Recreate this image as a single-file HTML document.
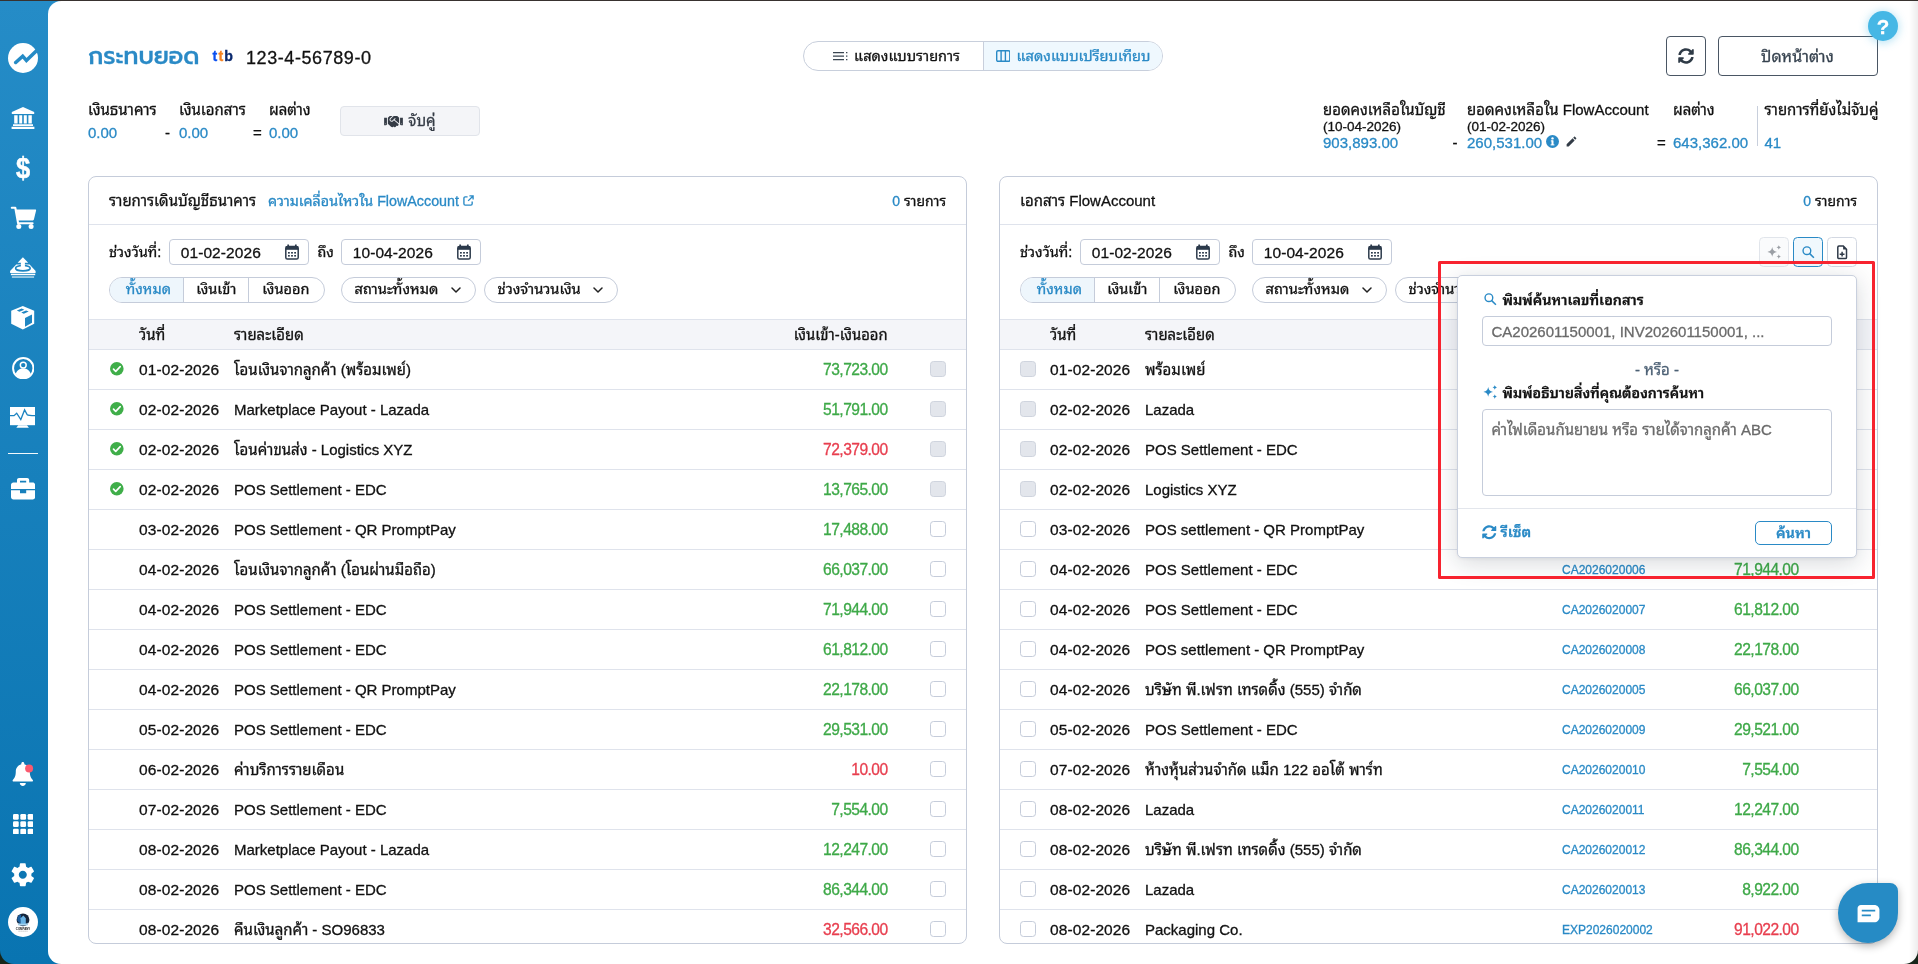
<!DOCTYPE html>
<html lang="th">
<head>
<meta charset="utf-8">
<title>กระทบยอด - FlowAccount</title>
<style>
*{box-sizing:border-box;margin:0;padding:0}
html,body{width:1918px;height:964px;overflow:hidden;background:#0d1a12}
body{font-family:"Liberation Sans","Noto Sans Thai Looped","Loma","Noto Sans Thai",sans-serif;font-size:15px;line-height:20px;color:#111;-webkit-font-smoothing:antialiased;-webkit-text-stroke:.3px}
#win{position:absolute;left:0;top:0;width:1918px;height:964px;overflow:hidden;background:#16261a;will-change:transform}
#win:before{content:"";position:absolute;left:0;top:0;width:1918px;height:1px;background:#38322f;z-index:50}
#side{position:absolute;left:0;top:0;width:60px;height:964px;background:linear-gradient(180deg,#258cc7 0%,#0974b1 100%);border-radius:0 0 0 14px}
#side svg{position:absolute;display:block}
svg text{-webkit-text-stroke:0}
#main{position:absolute;left:48px;top:1px;width:1870px;height:963px;background:#fff;border-radius:13px 0 14px 13px}
#main:after{content:"";position:absolute;right:0;top:0;width:9px;height:100%;background:linear-gradient(90deg,rgba(0,0,0,0),rgba(0,0,0,.07));border-radius:0 0 14px 0}
.abs{position:absolute;white-space:nowrap}
.blue{color:#2a8ac6}
/* header */
#title{left:40px;top:37px;font-family:"Liberation Sans","Prompt","Kanit","Noto Sans Thai",sans-serif;font-size:23.5px;line-height:36px;color:#2a8ac6;font-weight:500}
#ttb{left:164.6px;top:44.85px;font-size:14.2px;line-height:20px;font-weight:700;letter-spacing:1.05px;color:#0a4ff0}
#acct{left:198px;top:44px;font-size:18px;line-height:26px;letter-spacing:.58px;color:#111}
#toggle{left:755px;top:40px;width:360px;height:30px;border:1px solid #c8cfdc;border-radius:15px;overflow:hidden;display:flex;background:#fff}
#toggle span{font-size:14.6px;display:flex;align-items:center;justify-content:center;height:100%;white-space:nowrap}
#toggle .t1{width:180px;padding-left:6px}
#toggle .t2{width:180px;border-left:1px solid #c8cfdc;background:#eff8fe;color:#2a8ac6}
#toggle svg{width:14.5px;height:14px;margin-right:6.5px;display:block}
#refresh{left:1618px;top:34.9px;width:40px;height:40px;border:1px solid #4a5664;border-radius:4px;background:#fff}
#refresh svg{position:absolute;left:11px;top:11px;width:16px;height:16px}
#close{left:1670.1px;top:34.9px;width:159.7px;padding-right:1px;height:40px;border:1px solid #4a5664;border-radius:4px;background:#fff;text-align:center;line-height:40px;font-size:16px;color:#36424f}
/* summary */
.sm{font-size:15px;line-height:18px}
.smv{font-size:15px;line-height:18px;color:#2a8ac6}
#pair{left:292px;top:105px;width:140px;height:29.5px;border:1px solid #e1e4ea;border-radius:4px;background:#f4f5f8;text-align:center;line-height:28px;color:#353c46}
#pair svg{display:inline-block;width:19px;height:15px;vertical-align:-2.5px;margin-right:5px}
#vdiv{left:1709px;top:105px;width:1px;height:40px;background:#c8cfdc}
/* panels */
.panel{position:absolute;top:175px;width:879px;height:768px;border:1px solid #c5ccda;border-radius:8px;overflow:hidden;background:#fff}
#pl{left:40px}
#pr{left:951px}
.panel>*{position:absolute;white-space:nowrap}
.ph{left:0;top:0;width:100%;height:48px;border-bottom:1px solid #dfe3ec}
.ph>*{position:absolute;white-space:nowrap;top:14px;line-height:20px}
.pt{left:20px}
.plink{left:179px;color:#2a8ac6;font-size:14.3px}
.plink svg{display:inline-block;width:11px;height:11px;margin-left:4px;vertical-align:0}
.pc{right:20px;font-size:14px}
.pc b{font-weight:400;color:#2a8ac6}
.dates{left:0;top:62px;width:500px;height:26px}
.dates>*{position:absolute;white-space:nowrap}
.lbl{left:20px;top:3px;line-height:20px;font-size:14.55px}
.to{left:228.5px;top:3px;line-height:20px;font-size:14.55px}
.dinp{top:0;width:139.5px;height:25.5px;border:1px solid #c5ccda;border-radius:4px;background:#fff}
.dinp span{position:absolute;left:10.7px;top:3px;line-height:20px;letter-spacing:.1px;font-size:15.5px}
.dinp svg{position:absolute;right:8.4px;top:4px;width:14px;height:16px}
.d1{left:80px}
.d2{left:252px}
.seg{left:20px;top:100px;width:216px;font-size:14.55px;height:25.5px;border:1px solid #c5ccda;border-radius:13px;overflow:hidden;display:flex;background:#fff}
.seg span{height:100%;text-align:center;line-height:23px;border-left:1px solid #c5ccda}
.seg .s1{width:73.3px;border-left:0;padding-left:3.5px}
.seg .s2{width:65px}
.seg .s3{width:75.7px;padding-right:1.5px}
.seg .on{background:#eef6fc;color:#2a8ac6}
.dd{top:100px;height:25.5px;border:1px solid #c5ccda;border-radius:13px;background:#fff}
.dd span{position:absolute;left:12.5px;top:0;line-height:23px;font-size:14.65px}
.dd svg{position:absolute;right:14px;top:9px;width:10px;height:6px}
.dd1{left:252px;width:134.5px}
.dd2{left:395px;width:133.5px}
.th{left:0;top:142px;width:100%;height:31px;background:#f4f5f9;border-top:1px solid #dfe3ec;border-bottom:1px solid #dfe3ec}
.th>*,.row>*{position:absolute;white-space:nowrap;line-height:20px}
.th>*{top:5px}
.th .c-amt{font-size:14.85px;margin-right:-.7px}
.rows{left:0;top:173px;width:100%}
.row{position:relative;width:100%;height:40px;border-bottom:1px solid #dfe3ec}
.row>*{top:10px}
#pl .c-date{left:50px}
#pl .c-desc{left:145px}
#pl .c-amt{right:79px}
#pl .cb{left:841px}
#pl .ok{left:21.2px;top:12.3px;width:13.6px;height:13.6px}
#pr .cb{left:20px}
#pr .c-date{left:50px}
#pr .c-desc{left:145px}
#pr .c-doc{left:562px;font-size:12px;color:#2a8ac6;margin-top:-.4px}
#pr .th .c-doc{font-size:15px;color:#111}
#pr .c-amt{right:79px}
.c-date{letter-spacing:.1px;font-size:15.5px}
.th .c-date{letter-spacing:0;font-size:15px}
.row .c-amt{font-size:15.6px;letter-spacing:-.55px;margin-right:-.55px}
.g{color:#3ea948}
.r{color:#e83f4f}
.cb{top:10.8px !important;width:16px;height:16px;border:1px solid #c5ccda;border-radius:3.5px;background:#fff}
.cb.dis{background:#e3e6ec;border-color:#cfd4de}
/* tools */
.tool{top:60.2px;width:29.5px;height:29.5px;border:1px solid #d3d8e2;border-radius:4.5px;background:#fff}
.tool svg{position:absolute;left:5.75px;top:5.75px;width:16px;height:16px}
.tl1{left:759.2px;background:#fafbfc;border-color:#e1e5eb}
.tl2{left:793.1px;border-color:#2a8ac6;background:#f0f8fd}
.tl3{left:827.2px}
/* popup */
#pop{left:1409px;top:274px;width:400px;height:283px;border:1px solid #c9d0de;border-radius:5px;background:#fff;box-shadow:0 5px 24px rgba(20,30,50,.17),0 1px 3px rgba(20,30,50,.06);z-index:20}
#pop>*{position:absolute;white-space:nowrap}
#pop .l1{left:44.5px;top:13.5px;font-weight:600;font-size:14.4px;line-height:20px}
#pop .i1{left:23.5px;top:15px;width:16px;height:16px}
#pop .inp{left:24px;top:40px;width:350px;height:30px;border:1px solid #c5ccda;border-radius:4px;color:#6a6a6a;line-height:29px;padding-left:8.5px;font-size:15px}
#pop .or{left:0;top:84px;width:100%;text-align:center;color:#4d6175;line-height:20px}
#pop .l2{left:44.5px;top:106.5px;font-weight:600;font-size:14.25px;line-height:20px}
#pop .i2{left:24px;top:108px;width:16px;height:16px}
#pop .ta{left:24px;top:133px;width:350px;height:87px;border:1px solid #c5ccda;border-radius:4px;color:#6a6a6a;line-height:20px;padding:9.8px 8.5px;font-size:15px}
#pop .sep{left:0;top:232.3px;width:100%;height:1px;background:#e3e6ec}
#pop .reset{left:24px;top:246px;color:#2a8ac6;line-height:20px;font-weight:600;font-size:14.6px}
#pop .reset svg{display:inline-block;width:14.5px;height:14.5px;vertical-align:-2.5px;margin-right:4px}
#pop .go{left:297px;top:245px;width:77px;height:24px;border:1px solid #2a8ac6;border-radius:5px;color:#2a8ac6;text-align:center;line-height:22px;font-weight:600;font-size:14.6px}
#red{left:1390.2px;top:259.9px;width:437.3px;height:317.9px;border:3.5px solid #f7232f;border-radius:1.5px;z-index:30}
/* floats */
#help{left:1868px;top:11px;width:30px;height:30px;border-radius:50%;background:#46b7e5;box-shadow:0 1px 8px 1px rgba(70,183,229,.38);color:#fff;font-weight:700;font-size:20.5px;line-height:31px;text-align:center;z-index:40}
#chat{left:1838px;top:883px;width:60px;height:60px;border-radius:30px 8px 30px 30px;background:#268bc5;box-shadow:0 3px 8px rgba(0,0,0,.3);z-index:40}
#chat svg{position:absolute;left:19px;top:22.3px;width:23px;height:17.3px}
</style>
</head>
<body>
<div id="win">
<div id="side">
<!-- trend logo -->
<svg style="left:7.900px;top:42.900px;width:30px;height:30px" viewBox="0 0 30 30"><circle cx="15" cy="15" r="15" fill="#fff"/><path d="M7.700 19.500l7-6.300 3.700 4.200L30 6.200" fill="none" stroke="#258bc6" stroke-width="3.500" stroke-linecap="round" stroke-linejoin="miter"/></svg>
<!-- bank -->
<svg style="left:11px;top:106.500px;width:24px;height:22px" viewBox="0 0 24 22"><path fill="#fff" d="M12 0L.800 5v2h22.400V5zM3.200 8.200h3.400v8.200H3.200zM8.200 8.200h3v8.200h-3zM12.800 8.200h3v8.200h-3zM17.400 8.200h3.400v8.200h-3.400zM2 17.200h20V19H2zM.600 19.800h22.800V22H.600z"/></svg>
<!-- dollar -->
<svg style="left:13px;top:152.500px;width:20px;height:31px" viewBox="0 0 20 31"><text x="11.400" y="25" text-anchor="middle" font-family="Liberation Sans, sans-serif" font-weight="700" font-size="29" fill="#fff" stroke="#fff" stroke-width=".5" transform="scale(.88,1)">$</text></svg>
<!-- cart -->
<svg style="left:10px;top:206px;width:27px;height:24px" viewBox="0 0 27 24"><path d="M1.800 1.800H5.300L8.100 17.200H22.600" stroke="#fff" stroke-width="2.100" fill="none" stroke-linecap="round" stroke-linejoin="round"/><path fill="#fff" d="M5.800 3.500h19.600c.5 0 .8.400.7.900l-2.200 9.200c-.1.500-.5.800-1 .800H8z"/><circle cx="8.800" cy="20.500" r="2.500" fill="#fff"/><circle cx="21.100" cy="20.500" r="2.500" fill="#fff"/></svg>
<!-- upload tray -->
<svg style="left:10px;top:257px;width:26px;height:22px" viewBox="0 0 26 22"><path fill="#fff" d="M6.200 7.600h13.400l6 6.400v1.900H.1V14z"/><ellipse cx="12.900" cy="11.200" rx="7.300" ry="2.700" fill="none" stroke="#1f86c2" stroke-width="1.600"/><path fill="#fff" d="M12.900.300l5.300 5.500h-3.300v5.400h-4V5.800H7.600z"/><rect x=".900" y="16.700" width="24.300" height="1.500" fill="#fff"/><rect x="1.900" y="19.200" width="22.200" height="1.700" fill="#fff" opacity=".6"/></svg>
<!-- box -->
<svg style="left:11px;top:305.500px;width:24px;height:24px" viewBox="0 0 24 24"><path fill="#fff" d="M11.800.100l11.400 4.700v12.900l-11.400 5.900L.200 17.700V4.800z"/><path fill="#1f86c2" d="M14 12.100l7-3.600v8.200l-7 4z"/><path fill="#1f86c2" d="M5.800 4.600l4.900-2 2.600 1.100-4.900 2.100zM10.200 6.600l4.900-2.100 2.600 1.100-4.900 2.200z"/></svg>
<!-- user circle -->
<svg style="left:11.700px;top:356.600px;width:22.500px;height:22.500px" viewBox="0 0 23 23"><circle cx="11.500" cy="11.500" r="10.400" fill="none" stroke="#fff" stroke-width="2"/><circle cx="11.500" cy="8.300" r="3" fill="none" stroke="#fff" stroke-width="1.500"/><path fill="#fff" d="M3.800 17.400c.9-3.600 3.900-5.600 7.700-5.600s6.800 2 7.700 5.600c-1.800 2.900-4.500 4.400-7.700 4.400s-5.900-1.500-7.700-4.400z"/></svg>
<!-- monitor -->
<svg style="left:10.300px;top:407.200px;width:25.200px;height:20.800px" viewBox="0 0 25.200 20.800"><path fill="#fff" d="M0 0h25.200v18.200H0z"/><path fill="#fff" d="M8.200 18.200h8.800l1.900 2.600H6.300z"/><path d="M0 8.700h4l2.700-2.500 4.100 6.300 3.800-9.600 2.400 4.500c1.200 1.100 3.600 1.300 8.200 1.300" fill="none" stroke="#1c83c0" stroke-width="1.300" stroke-linejoin="miter"/></svg>
<div style="position:absolute;left:8px;top:452.700px;width:30px;height:1.500px;background:rgba(255,255,255,.95)"></div>
<!-- briefcase -->
<svg style="left:10.900px;top:478.300px;width:24.200px;height:21.500px" viewBox="0 0 24.200 21.500"><path fill="#fff" d="M8 0h8.200c1.100 0 2 .9 2 2v2.400h3.600c1.300 0 2.400 1.100 2.400 2.400v4.200H15.200v-.1H9v.1H0V6.800c0-1.300 1.100-2.400 2.400-2.400H6V2c0-1.100.9-2 2-2zm1 2.700v1.700h6.200V2.700z"/><path fill="#fff" d="M0 12.300h9v3h6.200v-3h9v6.800c0 1.300-1.100 2.400-2.400 2.400H2.400C1.100 21.500 0 20.400 0 19.100z"/></svg>
<!-- bell -->
<svg style="left:12px;top:761.500px;width:25px;height:26px" viewBox="0 0 25 26"><path fill="#fff" d="M10.800 0c-.9 0-1.500.7-1.500 1.500v.8C6 3.200 3.800 6.200 3.800 9.600c0 4.600-1.300 6.600-3 8.300-.5.600-.1 1.700.8 1.700h18.400c.9 0 1.300-1.100.8-1.700-1.700-1.700-3-3.700-3-8.300 0-3.400-2.200-6.400-5.500-7.300v-.8c0-.8-.6-1.500-1.500-1.500z"/><path fill="#fff" d="M7.800 21h6c0 1.600-1.300 2.900-3 2.900s-3-1.300-3-2.900z"/><circle cx="17.100" cy="6.400" r="4" fill="#fb5a6f"/></svg>
<!-- grid -->
<svg style="left:12.800px;top:813.700px;width:20.400px;height:20.400px" viewBox="0 0 21 21"><g fill="#fff"><rect x="0" y="0" width="5.900" height="5.900" rx="1.300"/><rect x="7.550" y="0" width="5.900" height="5.900" rx="1.300"/><rect x="15.100" y="0" width="5.900" height="5.900" rx="1.300"/><rect x="0" y="7.550" width="5.900" height="5.900" rx="1.300"/><rect x="7.550" y="7.550" width="5.900" height="5.900" rx="1.300"/><rect x="15.100" y="7.550" width="5.900" height="5.900" rx="1.300"/><rect x="0" y="15.100" width="5.900" height="5.900" rx="1.300"/><rect x="7.550" y="15.100" width="5.900" height="5.900" rx="1.300"/><rect x="15.100" y="15.100" width="5.900" height="5.900" rx="1.300"/></g></svg>
<!-- gear -->
<svg style="left:9.200px;top:860.700px;width:27.600px;height:27.600px" viewBox="0 0 24 24"><path fill="#fff" d="M19.430 12.980c.040-.320.070-.640.070-.980s-.030-.660-.070-.980l2.110-1.650c.190-.150.240-.420.120-.640l-2-3.460c-.120-.220-.390-.300-.610-.220l-2.490 1c-.520-.400-1.080-.730-1.690-.980l-.380-2.650C14.460 2.180 14.250 2 14 2h-4c-.250 0-.460.180-.490.420l-.380 2.650c-.610.250-1.170.590-1.690.980l-2.490-1c-.230-.090-.490 0-.610.220l-2 3.460c-.130.220-.070.490.120.640l2.110 1.650c-.040.320-.070.650-.070.980s.030.660.070.980l-2.110 1.650c-.190.150-.240.420-.120.640l2 3.460c.120.220.390.300.610.220l2.490-1c.520.400 1.080.730 1.690.980l.380 2.650c.030.240.240.420.490.420h4c.250 0 .460-.180.490-.420l.380-2.650c.610-.250 1.170-.590 1.690-.980l2.490 1c.230.090.490 0 .610-.220l2-3.460c.120-.220.070-.490-.120-.640l-2.110-1.650zM12 15.500c-1.930 0-3.500-1.570-3.500-3.500s1.570-3.500 3.500-3.500 3.500 1.570 3.500 3.500-1.570 3.500-3.500 3.500z"/></svg>
<!-- avatar -->
<svg style="left:8px;top:906.800px;width:30px;height:30px" viewBox="0 0 30 30"><circle cx="15" cy="15" r="15" fill="#fff"/><circle cx="15" cy="12.800" r="6.400" fill="#14243a"/><path d="M9.400 13.800a5.800 5.800 0 0 1 3.800-6.600l-.6 9.800z" fill="#1c5fa0"/><path d="M12.600 18V11.200l2.700-2.600 2.500 2.600V18z" fill="#69b3e4"/><path d="M10 15.800c1.600 1.400 8.400 1.400 10 0l-.4 2.600h-9.200z" fill="#a7d4ef"/><text x="15" y="22.600" text-anchor="middle" font-family="Liberation Sans, sans-serif" font-weight="700" font-size="2.850" fill="#111">COMPANY</text><path d="M10.500 24.200h9" stroke="#777" stroke-width=".5" stroke-dasharray="1.200 .800"/></svg>
</div>
<div id="main">
<div class="abs" id="title">กระทบยอด</div>
<div class="abs" id="ttb">t<span style="color:#f58220">t</span><span style="color:#0b2a6f">b</span></div>
<div class="abs" id="acct">123-4-56789-0</div>
<div class="abs" id="toggle"><span class="t1"><svg viewBox="0 0 14.500 14"><path d="M0 3.600h11M0 7.100h11M0 10.600h11" stroke="#3b4652" stroke-width="1.300" fill="none"/><path d="M13 3.600h1.400M13 7.100h1.400M13 10.600h1.400" stroke="#3b4652" stroke-width="1.300" fill="none"/></svg>แสดงแบบรายการ</span><span class="t2"><svg viewBox="0 0 14.500 14"><rect x="0.700" y="1.700" width="13.100" height="10.600" rx="1.300" fill="none" stroke="#2a8ac6" stroke-width="1.400"/><path d="M5.100 1.700v10.600M9.400 1.700v10.600" stroke="#2a8ac6" stroke-width="1.400"/></svg>แสดงแบบเปรียบเทียบ</span></div>
<div class="abs" id="refresh"><svg viewBox="0 0 512 512"><path fill="#2f3b47" d="M370.700 133.300C339.500 104 298.900 88 255.800 88c-77.500.1-144.300 53.200-162.800 126.900-1.300 5.400-6.100 9.200-11.700 9.200H24.100c-7.500 0-13.200-6.800-11.800-14.200C33.900 94.900 134.800 8 256 8c66.400 0 126.800 26.100 171.300 68.700L463 41C478.100 25.900 504 36.600 504 57.900V192c0 13.300-10.700 24-24 24H345.900c-21.400 0-32.100-25.900-17-41l41.800-41.700zM32 296h134.100c21.400 0 32.100 25.900 17 41l-41.800 41.800c31.300 29.300 71.800 45.300 114.900 45.300 77.400-.1 144.300-53.100 162.800-126.800 1.300-5.400 6.100-9.200 11.700-9.200h57.300c7.500 0 13.200 6.800 11.800 14.200C478.100 417.100 377.200 504 256 504c-66.400 0-126.800-26.100-171.300-68.700L49 471c-15.100 15.100-41 4.400-41-16.900V320c0-13.300 10.700-24 24-24z"/></svg></div>
<div class="abs" id="close">ปิดหน้าต่าง</div>

<div class="abs sm" style="left:40px;top:100px">เงินธนาคาร</div>
<div class="abs smv" style="left:40px;top:123px">0.00</div>
<div class="abs sm" style="left:117px;top:123px">-</div>
<div class="abs sm" style="left:131px;top:100px">เงินเอกสาร</div>
<div class="abs smv" style="left:131px;top:123px">0.00</div>
<div class="abs sm" style="left:205px;top:123px">=</div>
<div class="abs sm" style="left:221px;top:100px">ผลต่าง</div>
<div class="abs smv" style="left:221px;top:123px">0.00</div>
<div class="abs" id="pair"><svg viewBox="0 0 640 512"><path fill="#353c46" d="M434.700 64h-85.900c-8 0-15.700 3-21.600 8.400l-98.300 90c-.1.100-.2.300-.3.400-16.600 15.600-16.300 40.500-2.100 56 12.700 13.900 39.400 17.600 56.100 2.700.1-.1.300-.1.400-.2l79.900-73.200c6.500-5.900 16.700-5.500 22.600 1 6 6.500 5.500 16.600-1 22.600l-26.100 23.900L504 313.800c2.900 2.400 5.500 5 7.900 7.700V128l-54.600-54.600c-5.900-6-14.100-9.400-22.600-9.400zM544 128.200v223.900c0 17.700 14.300 32 32 32h64V128.200h-96zm48 223.900c-8.800 0-16-7.200-16-16s7.200-16 16-16 16 7.200 16 16-7.200 16-16 16zM0 384h64c17.700 0 32-14.300 32-32V128.200H0V384zm48-63.900c8.800 0 16 7.200 16 16s-7.200 16-16 16-16-7.200-16-16c0-8.900 7.200-16 16-16zm435.900 18.600L334.600 217.500l-30 27.500c-29.700 27.100-75.200 24.500-101.700-4.400-26.900-29.400-24.800-74.900 4.400-101.700L289.100 64h-83.800c-8.500 0-16.600 3.400-22.600 9.400L128 128v223.900h18.300l90.500 81.900c27.400 22.300 67.700 18.100 90-9.300l.2-.2 17.900 15.500c15.900 13 39.400 10.500 52.300-5.400l31.400-38.600 5.400 4.400c13.700 11.100 33.900 9.100 45-4.700l9.500-11.700c11.200-13.800 9.100-33.900-4.600-45.100z"/></svg>จับคู่</div>

<div class="abs sm" style="left:1275px;top:100px">ยอดคงเหลือในบัญชี</div>
<div class="abs sm" style="left:1275px;top:117px;font-size:13.500px">(10-04-2026)</div>
<div class="abs smv" style="left:1275px;top:133px">903,893.00</div>
<div class="abs sm" style="left:1404.500px;top:133px">-</div>
<div class="abs sm" style="left:1419px;top:100px">ยอดคงเหลือใน FlowAccount</div>
<div class="abs sm" style="left:1419px;top:117px;font-size:13.500px">(01-02-2026)</div>
<div class="abs smv" style="left:1419px;top:133px">260,531.00</div>
<svg class="abs" style="left:1498px;top:134px;width:13px;height:13px" viewBox="0 0 13 13"><circle cx="6.500" cy="6.500" r="6.500" fill="#2a8ac6"/><rect x="5.500" y="5.400" width="2" height="4.600" fill="#fff"/><rect x="4.800" y="5.400" width="2.200" height="1" fill="#fff"/><rect x="4.600" y="9.400" width="3.800" height="1" fill="#fff"/><circle cx="6.500" cy="3.400" r="1.200" fill="#fff"/></svg>
<svg class="abs" style="left:1516.500px;top:134px;width:13px;height:13px" viewBox="0 0 24 24"><path fill="#333c47" d="M3 17.250V21h3.750L17.810 9.940l-3.750-3.750L3 17.250zM20.710 7.040c.390-.390.390-1.020 0-1.410l-2.340-2.340c-.390-.390-1.020-.390-1.410 0l-1.830 1.830 3.750 3.750 1.830-1.830z"/></svg>
<div class="abs sm" style="left:1609px;top:133px">=</div>
<div class="abs sm" style="left:1625px;top:100px">ผลต่าง</div>
<div class="abs smv" style="left:1625px;top:133px">643,362.00</div>
<div class="abs" id="vdiv"></div>
<div class="abs sm" style="left:1716.500px;top:100px">รายการที่ยังไม่จับคู่</div>
<div class="abs smv" style="left:1716.500px;top:133px">41</div>
<div class="panel" id="pl">
<div class="ph"><span class="pt">รายการเดินบัญชีธนาคาร</span><span class="plink">ความเคลื่อนไหวใน FlowAccount<svg class="ext" viewBox="0 0 12 12"><path d="M5 2H2.4C1.6 2 1 2.6 1 3.4v6.2c0 .8.6 1.4 1.4 1.4h6.2c.8 0 1.4-.6 1.4-1.4V7" fill="none" stroke="#2a8ac6" stroke-width="1.5"/><path d="M7 1h4v4M11 1L5.6 6.4" fill="none" stroke="#2a8ac6" stroke-width="1.5"/></svg></span><span class="pc"><b>0</b> รายการ</span></div>
<div class="dates"><span class="lbl">ช่วงวันที่:</span><span class="dinp d1"><span>01-02-2026</span><svg class="cal" viewBox="0 0 14 16"><path d="M3.2 0.6v2.2M10.8 0.6v2.2" stroke="#2c3a4b" stroke-width="1.7" fill="none"/><rect x="0.8" y="2.6" width="12.4" height="12.4" rx="1.6" fill="none" stroke="#2c3a4b" stroke-width="1.5"/><rect x="0.8" y="2.6" width="12.4" height="3.2" fill="#2c3a4b"/><g fill="#2c3a4b"><rect x="3" y="8" width="1.8" height="1.6"/><rect x="6.1" y="8" width="1.8" height="1.6"/><rect x="9.2" y="8" width="1.8" height="1.6"/><rect x="3" y="11" width="1.8" height="1.6"/><rect x="6.1" y="11" width="1.8" height="1.6"/><rect x="9.2" y="11" width="1.8" height="1.6"/></g></svg></span><span class="to">ถึง</span><span class="dinp d2"><span>10-04-2026</span><svg class="cal" viewBox="0 0 14 16"><path d="M3.2 0.6v2.2M10.8 0.6v2.2" stroke="#2c3a4b" stroke-width="1.7" fill="none"/><rect x="0.8" y="2.6" width="12.4" height="12.4" rx="1.6" fill="none" stroke="#2c3a4b" stroke-width="1.5"/><rect x="0.8" y="2.6" width="12.4" height="3.2" fill="#2c3a4b"/><g fill="#2c3a4b"><rect x="3" y="8" width="1.8" height="1.6"/><rect x="6.1" y="8" width="1.8" height="1.6"/><rect x="9.2" y="8" width="1.8" height="1.6"/><rect x="3" y="11" width="1.8" height="1.6"/><rect x="6.1" y="11" width="1.8" height="1.6"/><rect x="9.2" y="11" width="1.8" height="1.6"/></g></svg></span></div><div class="seg"><span class="s1 on">ทั้งหมด</span><span class="s2">เงินเข้า</span><span class="s3">เงินออก</span></div><div class="dd dd1"><span>สถานะทั้งหมด</span><svg class="chev" viewBox="0 0 10 6"><path d="M1 1l4 4 4-4" fill="none" stroke="#222" stroke-width="1.5" stroke-linecap="round" stroke-linejoin="round"/></svg></div><div class="dd dd2"><span>ช่วงจำนวนเงิน</span><svg class="chev" viewBox="0 0 10 6"><path d="M1 1l4 4 4-4" fill="none" stroke="#222" stroke-width="1.5" stroke-linecap="round" stroke-linejoin="round"/></svg></div>
<div class="th"><span class="c-date">วันที่</span><span class="c-desc">รายละเอียด</span><span class="c-amt">เงินเข้า-เงินออก</span></div>
<div class="rows">
<div class="row"><svg class="ok" viewBox="0 0 14 14"><circle cx="7" cy="7" r="7" fill="#3fae49"/><path d="M3.6 7.3l2.3 2.3 4.6-4.8" fill="none" stroke="#fff" stroke-width="1.7" stroke-linecap="round" stroke-linejoin="round"/></svg><span class="c-date">01-02-2026</span><span class="c-desc">โอนเงินจากลูกค้า (พร้อมเพย์)</span><span class="c-amt g">73,723.00</span><span class="cb dis"></span></div>
<div class="row"><svg class="ok" viewBox="0 0 14 14"><circle cx="7" cy="7" r="7" fill="#3fae49"/><path d="M3.6 7.3l2.3 2.3 4.6-4.8" fill="none" stroke="#fff" stroke-width="1.7" stroke-linecap="round" stroke-linejoin="round"/></svg><span class="c-date">02-02-2026</span><span class="c-desc">Marketplace Payout - Lazada</span><span class="c-amt g">51,791.00</span><span class="cb dis"></span></div>
<div class="row"><svg class="ok" viewBox="0 0 14 14"><circle cx="7" cy="7" r="7" fill="#3fae49"/><path d="M3.6 7.3l2.3 2.3 4.6-4.8" fill="none" stroke="#fff" stroke-width="1.7" stroke-linecap="round" stroke-linejoin="round"/></svg><span class="c-date">02-02-2026</span><span class="c-desc">โอนค่าขนส่ง - Logistics XYZ</span><span class="c-amt r">72,379.00</span><span class="cb dis"></span></div>
<div class="row"><svg class="ok" viewBox="0 0 14 14"><circle cx="7" cy="7" r="7" fill="#3fae49"/><path d="M3.6 7.3l2.3 2.3 4.6-4.8" fill="none" stroke="#fff" stroke-width="1.7" stroke-linecap="round" stroke-linejoin="round"/></svg><span class="c-date">02-02-2026</span><span class="c-desc">POS Settlement - EDC</span><span class="c-amt g">13,765.00</span><span class="cb dis"></span></div>
<div class="row"><span class="c-date">03-02-2026</span><span class="c-desc">POS Settlement - QR PromptPay</span><span class="c-amt g">17,488.00</span><span class="cb"></span></div>
<div class="row"><span class="c-date">04-02-2026</span><span class="c-desc">โอนเงินจากลูกค้า (โอนผ่านมือถือ)</span><span class="c-amt g">66,037.00</span><span class="cb"></span></div>
<div class="row"><span class="c-date">04-02-2026</span><span class="c-desc">POS Settlement - EDC</span><span class="c-amt g">71,944.00</span><span class="cb"></span></div>
<div class="row"><span class="c-date">04-02-2026</span><span class="c-desc">POS Settlement - EDC</span><span class="c-amt g">61,812.00</span><span class="cb"></span></div>
<div class="row"><span class="c-date">04-02-2026</span><span class="c-desc">POS Settlement - QR PromptPay</span><span class="c-amt g">22,178.00</span><span class="cb"></span></div>
<div class="row"><span class="c-date">05-02-2026</span><span class="c-desc">POS Settlement - EDC</span><span class="c-amt g">29,531.00</span><span class="cb"></span></div>
<div class="row"><span class="c-date">06-02-2026</span><span class="c-desc">ค่าบริการรายเดือน</span><span class="c-amt r">10.00</span><span class="cb"></span></div>
<div class="row"><span class="c-date">07-02-2026</span><span class="c-desc">POS Settlement - EDC</span><span class="c-amt g">7,554.00</span><span class="cb"></span></div>
<div class="row"><span class="c-date">08-02-2026</span><span class="c-desc">Marketplace Payout - Lazada</span><span class="c-amt g">12,247.00</span><span class="cb"></span></div>
<div class="row"><span class="c-date">08-02-2026</span><span class="c-desc">POS Settlement - EDC</span><span class="c-amt g">86,344.00</span><span class="cb"></span></div>
<div class="row"><span class="c-date">08-02-2026</span><span class="c-desc">คืนเงินลูกค้า - SO96833</span><span class="c-amt r">32,566.00</span><span class="cb"></span></div>
</div>
</div>
<div class="panel" id="pr">
<div class="ph"><span class="pt">เอกสาร FlowAccount</span><span class="pc"><b>0</b> รายการ</span></div>
<div class="dates"><span class="lbl">ช่วงวันที่:</span><span class="dinp d1"><span>01-02-2026</span><svg class="cal" viewBox="0 0 14 16"><path d="M3.2 0.6v2.2M10.8 0.6v2.2" stroke="#2c3a4b" stroke-width="1.7" fill="none"/><rect x="0.8" y="2.6" width="12.4" height="12.4" rx="1.6" fill="none" stroke="#2c3a4b" stroke-width="1.5"/><rect x="0.8" y="2.6" width="12.4" height="3.2" fill="#2c3a4b"/><g fill="#2c3a4b"><rect x="3" y="8" width="1.8" height="1.6"/><rect x="6.1" y="8" width="1.8" height="1.6"/><rect x="9.2" y="8" width="1.8" height="1.6"/><rect x="3" y="11" width="1.8" height="1.6"/><rect x="6.1" y="11" width="1.8" height="1.6"/><rect x="9.2" y="11" width="1.8" height="1.6"/></g></svg></span><span class="to">ถึง</span><span class="dinp d2"><span>10-04-2026</span><svg class="cal" viewBox="0 0 14 16"><path d="M3.2 0.6v2.2M10.8 0.6v2.2" stroke="#2c3a4b" stroke-width="1.7" fill="none"/><rect x="0.8" y="2.6" width="12.4" height="12.4" rx="1.6" fill="none" stroke="#2c3a4b" stroke-width="1.5"/><rect x="0.8" y="2.6" width="12.4" height="3.2" fill="#2c3a4b"/><g fill="#2c3a4b"><rect x="3" y="8" width="1.8" height="1.6"/><rect x="6.1" y="8" width="1.8" height="1.6"/><rect x="9.2" y="8" width="1.8" height="1.6"/><rect x="3" y="11" width="1.8" height="1.6"/><rect x="6.1" y="11" width="1.8" height="1.6"/><rect x="9.2" y="11" width="1.8" height="1.6"/></g></svg></span></div><div class="seg"><span class="s1 on">ทั้งหมด</span><span class="s2">เงินเข้า</span><span class="s3">เงินออก</span></div><div class="dd dd1"><span>สถานะทั้งหมด</span><svg class="chev" viewBox="0 0 10 6"><path d="M1 1l4 4 4-4" fill="none" stroke="#222" stroke-width="1.5" stroke-linecap="round" stroke-linejoin="round"/></svg></div><div class="dd dd2"><span>ช่วงจำนวนเงิน</span><svg class="chev" viewBox="0 0 10 6"><path d="M1 1l4 4 4-4" fill="none" stroke="#222" stroke-width="1.5" stroke-linecap="round" stroke-linejoin="round"/></svg></div><div class="tool tl1"><svg viewBox="0 0 16 16"><path fill="#9b9fa5" d="M6.200 3.100C6.900 6.300 7.700 7.200 11 7.900 7.700 8.600 6.900 9.500 6.200 12.800 5.500 9.500 4.700 8.600 1.400 7.900 4.700 7.200 5.500 6.300 6.200 3.100z"/><path fill="#9b9fa5" d="M12.800 1.100c.3 1.400.8 1.900 2.300 2.300-1.500.4-2 .9-2.300 2.400-.3-1.500-.8-2-2.300-2.400 1.500-.4 2-.9 2.300-2.300zM12.800 10.300c.3 1.400.8 1.900 2.300 2.300-1.500.4-2 .9-2.300 2.400-.3-1.500-.8-2-2.300-2.400 1.500-.4 2-.9 2.300-2.300z"/></svg></div>
<div class="tool tl2"><svg viewBox="0 0 16 16"><circle cx="6.900" cy="6.700" r="3.850" fill="none" stroke="#2a8ac6" stroke-width="1.400"/><path d="M9.700 9.600l4.200 4.100" stroke="#2a8ac6" stroke-width="1.500" fill="none"/></svg></div>
<div class="tool tl3"><svg viewBox="0 0 16 16"><path d="M5 2h4.300l3.200 3.200v8.200c0 .7-.5 1.200-1.200 1.200H5c-.7 0-1.200-.5-1.200-1.200V3.200C3.800 2.500 4.300 2 5 2z" fill="none" stroke="#2f3a48" stroke-width="1.500"/><path d="M9.100 1.700l3.700 3.700H9.100z" fill="#2f3a48"/><path d="M8.100 7.800v4.800M5.700 10.200h4.800" stroke="#2f3a48" stroke-width="1.500"/></svg></div>

<div class="th"><span class="c-date">วันที่</span><span class="c-desc">รายละเอียด</span><span class="c-doc">เลขที่เอกสาร</span><span class="c-amt">มูลค่า</span></div>
<div class="rows">
<div class="row"><span class="cb dis"></span><span class="c-date">01-02-2026</span><span class="c-desc">พร้อมเพย์</span><span class="c-doc">CA2026020001</span><span class="c-amt g">73,723.00</span></div>
<div class="row"><span class="cb dis"></span><span class="c-date">02-02-2026</span><span class="c-desc">Lazada</span><span class="c-doc">CA2026020002</span><span class="c-amt g">51,791.00</span></div>
<div class="row"><span class="cb dis"></span><span class="c-date">02-02-2026</span><span class="c-desc">POS Settlement - EDC</span><span class="c-doc">CA2026020003</span><span class="c-amt g">13,765.00</span></div>
<div class="row"><span class="cb dis"></span><span class="c-date">02-02-2026</span><span class="c-desc">Logistics XYZ</span><span class="c-doc">EXP2026020001</span><span class="c-amt r">72,379.00</span></div>
<div class="row"><span class="cb"></span><span class="c-date">03-02-2026</span><span class="c-desc">POS settlement - QR PromptPay</span><span class="c-doc">CA2026020004</span><span class="c-amt g">17,488.00</span></div>
<div class="row"><span class="cb"></span><span class="c-date">04-02-2026</span><span class="c-desc">POS Settlement - EDC</span><span class="c-doc">CA2026020006</span><span class="c-amt g">71,944.00</span></div>
<div class="row"><span class="cb"></span><span class="c-date">04-02-2026</span><span class="c-desc">POS Settlement - EDC</span><span class="c-doc">CA2026020007</span><span class="c-amt g">61,812.00</span></div>
<div class="row"><span class="cb"></span><span class="c-date">04-02-2026</span><span class="c-desc">POS settlement - QR PromptPay</span><span class="c-doc">CA2026020008</span><span class="c-amt g">22,178.00</span></div>
<div class="row"><span class="cb"></span><span class="c-date">04-02-2026</span><span class="c-desc">บริษัท พี.เฟรท เทรดดิ้ง (555) จำกัด</span><span class="c-doc">CA2026020005</span><span class="c-amt g">66,037.00</span></div>
<div class="row"><span class="cb"></span><span class="c-date">05-02-2026</span><span class="c-desc">POS Settlement - EDC</span><span class="c-doc">CA2026020009</span><span class="c-amt g">29,521.00</span></div>
<div class="row"><span class="cb"></span><span class="c-date">07-02-2026</span><span class="c-desc">ห้างหุ้นส่วนจำกัด แม็ก 122 ออโต้ พาร์ท</span><span class="c-doc">CA2026020010</span><span class="c-amt g">7,554.00</span></div>
<div class="row"><span class="cb"></span><span class="c-date">08-02-2026</span><span class="c-desc">Lazada</span><span class="c-doc">CA2026020011</span><span class="c-amt g">12,247.00</span></div>
<div class="row"><span class="cb"></span><span class="c-date">08-02-2026</span><span class="c-desc">บริษัท พี.เฟรท เทรดดิ้ง (555) จำกัด</span><span class="c-doc">CA2026020012</span><span class="c-amt g">86,344.00</span></div>
<div class="row"><span class="cb"></span><span class="c-date">08-02-2026</span><span class="c-desc">Lazada</span><span class="c-doc">CA2026020013</span><span class="c-amt g">8,922.00</span></div>
<div class="row"><span class="cb"></span><span class="c-date">08-02-2026</span><span class="c-desc">Packaging Co.</span><span class="c-doc">EXP2026020002</span><span class="c-amt r">91,022.00</span></div>
</div>
</div>
<div class="abs" id="pop">
<svg class="i1" viewBox="0 0 16 16"><circle cx="6.900" cy="6.700" r="3.850" fill="none" stroke="#2a8ac6" stroke-width="1.400"/><path d="M9.700 9.600l4.200 4.100" stroke="#2a8ac6" stroke-width="1.500" fill="none"/></svg>
<span class="l1">พิมพ์ค้นหาเลขที่เอกสาร</span>
<div class="inp">CA202601150001, INV202601150001, ...</div>
<div class="or">- หรือ -</div>
<svg class="i2" viewBox="0 0 16 16"><path fill="#2a8ac6" d="M6.200 3.100C6.900 6.300 7.700 7.200 11 7.900 7.700 8.600 6.900 9.500 6.200 12.800 5.500 9.500 4.700 8.600 1.400 7.900 4.700 7.200 5.500 6.300 6.200 3.100z"/><path fill="#2a8ac6" d="M12.800 1.100c.3 1.400.8 1.900 2.300 2.300-1.500.4-2 .9-2.300 2.400-.3-1.500-.8-2-2.300-2.400 1.500-.4 2-.9 2.300-2.300zM12.800 10.300c.3 1.400.8 1.900 2.300 2.300-1.500.4-2 .9-2.300 2.400-.3-1.500-.8-2-2.300-2.400 1.500-.4 2-.9 2.300-2.300z"/></svg>
<span class="l2">พิมพ์อธิบายสิ่งที่คุณต้องการค้นหา</span>
<div class="ta">ค่าไฟเดือนกันยายน หรือ รายได้จากลูกค้า ABC</div>
<div class="sep"></div>
<div class="reset"><svg viewBox="0 0 512 512"><path fill="#2a8ac6" d="M370.700 133.300C339.500 104 298.900 88 255.800 88c-77.500.1-144.300 53.200-162.800 126.900-1.300 5.400-6.100 9.200-11.700 9.200H24.100c-7.500 0-13.200-6.800-11.800-14.200C33.900 94.900 134.800 8 256 8c66.400 0 126.800 26.100 171.300 68.700L463 41C478.100 25.900 504 36.600 504 57.900V192c0 13.300-10.700 24-24 24H345.900c-21.400 0-32.100-25.900-17-41l41.800-41.700zM32 296h134.100c21.400 0 32.100 25.900 17 41l-41.800 41.800c31.300 29.300 71.800 45.300 114.900 45.300 77.400-.1 144.300-53.100 162.800-126.800 1.300-5.400 6.100-9.200 11.700-9.200h57.300c7.500 0 13.200 6.800 11.800 14.200C478.100 417.100 377.200 504 256 504c-66.400 0-126.800-26.100-171.300-68.700L49 471c-15.100 15.100-41 4.400-41-16.900V320c0-13.300 10.700-24 24-24z"/></svg>รีเซ็ต</div>
<div class="go">ค้นหา</div>
</div>
<div class="abs" id="red"></div>
</div>
<div class="abs" id="help">?</div>
<div class="abs" id="chat"><svg viewBox="0 0 24 19"><path fill="#fff" d="M3.600 0h14.800C21.500 0 24 2.500 24 5.600v7.800c0 3.100-2.500 5.600-5.600 5.600H0V3.600C0 1.600 1.600 0 3.600 0z"/><path d="M4.600 6.200h14.800M4.600 11.400h10" stroke="#268bc5" stroke-width="1.700" fill="none"/></svg></div>
</div>
</body>
</html>
